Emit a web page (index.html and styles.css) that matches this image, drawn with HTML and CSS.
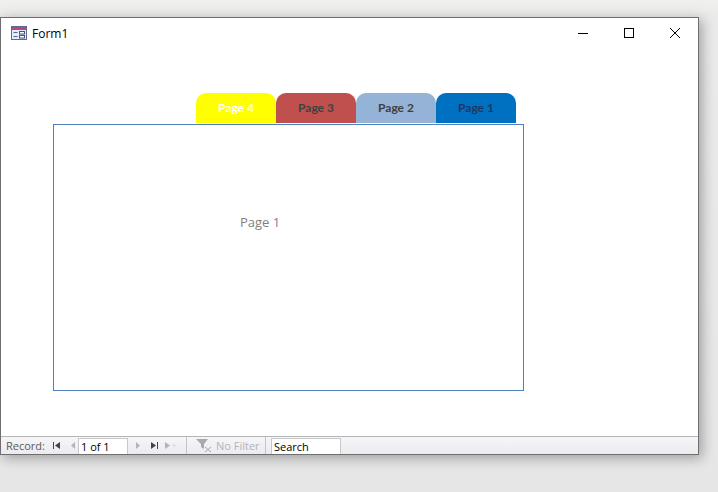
FILE: index.html
```html
<!DOCTYPE html>
<html lang="en">
<head>
<meta charset="utf-8">
<title>Form1</title>
<link rel="stylesheet" href="styles.css">
</head>
<body>
<div class="window">
  <header class="titlebar">
    <svg class="form-icon" width="16" height="15" viewBox="0 0 16 15">
      <rect x="0.5" y="0.5" width="15" height="13" fill="#eef1f8" stroke="#5a6a94"/>
      <rect x="1" y="1" width="14" height="3" fill="#b8487a"/>
      <rect x="1" y="4" width="14" height="9" fill="#e4eaf6"/>
      <path d="M2.5 6.5h4M2.5 10.5h4" stroke="#55688f" stroke-width="1"/>
      <rect x="8.5" y="5.5" width="5" height="2.5" fill="#fff" stroke="#3f5480"/>
      <rect x="8.5" y="9.5" width="5" height="2.5" fill="#fff" stroke="#3f5480"/>
    </svg>
    <span class="title">Form1</span>
    <div class="controls">
      <svg class="control" width="46" height="32" viewBox="0 0 46 32"><path d="M18 16.500h10" stroke="#000" fill="none"/></svg>
      <svg class="control" width="46" height="32" viewBox="0 0 46 32"><rect x="18.500" y="11.500" width="9" height="9" stroke="#000" fill="none"/></svg>
      <svg class="control" width="46" height="32" viewBox="0 0 46 32"><path d="M18 11l10 10M28 11l-10 10" stroke="#000" fill="none"/></svg>
    </div>
  </header>
  <main class="form-body">
    <div class="tabs">
      <div class="tab tab-yellow">Page 4</div>
      <div class="tab tab-red">Page 3</div>
      <div class="tab tab-blue">Page 2</div>
      <div class="tab tab-navy">Page 1</div>
    </div>
    <section class="page"><p class="page-label">Page 1</p></section>
  </main>
  <footer class="navbar">
    <span class="record-label">Record:</span>
    <svg class="nav-icon" width="10" height="9" viewBox="0 0 10 9"><path d="M1.500 1v7" stroke="#444" fill="none"/><path d="M8 1v7L3 4.500z" fill="#444"/></svg>
    <svg class="nav-icon nav-prev" width="8" height="9" viewBox="0 0 8 9"><path d="M6 1v7L2 4.500z" fill="#b4b4b8"/></svg>
    <div class="record-input">1 of 1</div>
    <svg class="nav-icon nav-next" width="8" height="9" viewBox="0 0 8 9"><path d="M2 1v7l4-3.500z" fill="#b4b4b8"/></svg>
    <svg class="nav-icon" width="10" height="9" viewBox="0 0 10 9"><path d="M2 1v7l5-3.500z" fill="#444"/><path d="M8.500 1v7" stroke="#444" fill="none"/></svg>
    <svg class="nav-icon" width="14" height="9" viewBox="0 0 14 9"><path d="M1 1v7l5-3.500z" fill="#b4b4b8"/><path d="M10 2.500v4M8 4.500h4" stroke="#dcdcdc" fill="none"/></svg>
    <div class="filter">
      <svg width="20" height="15" viewBox="0 0 20 15"><path d="M1 1h12L9 6v5L6 9V6z" fill="#a9a9ad"/><path d="M10 9l6 5M16 9l-6 5" stroke="#a9a9ad" fill="none"/></svg>
      <span class="filter-label">No Filter</span>
    </div>
    <div class="search">Search</div>
  </footer>
</div>
</body>
</html>
```

FILE: styles.css
```css
* { box-sizing: border-box; }

html, body {
  margin: 0;
  height: 100%;
}

body {
  padding-top: 17px;
  background: linear-gradient(#f0f0ef 0, #eaeaea 17px, #e6e6e6 100%);
  overflow: hidden;
}

.window {
  display: flex;
  flex-direction: column;
  width: 699px;
  height: 438px;
  background: #fff;
  border: 1px solid #6e6e6e;
  box-shadow: 3px 3px 12px rgba(0, 0, 0, 0.32);
}

.titlebar {
  display: flex;
  align-items: center;
  height: 30px;
  padding-left: 10px;
  flex: none;
}

.form-icon {
  display: block;
  margin-right: 5px;
}

.title {
  font: 12px "Open Sans", sans-serif;
  color: #000;
}

.controls {
  display: flex;
  margin-left: auto;
}

.control {
  display: block;
}

.form-body {
  flex: 1;
  padding-top: 45px;
  min-height: 0;
}

.tabs {
  display: flex;
  margin-left: 195px;
  height: 30px;
}

.tab {
  width: 80px;
  border-radius: 10px 10px 0 0;
  font: bold 12px/30px "Lato", sans-serif;
  text-align: center;
  color: #404040;
}

.tab-yellow { background: #ffff00; color: #fff; }
.tab-red { background: #c0504d; }
.tab-blue { background: #95b3d7; }
.tab-navy { background: #0070c0; color: #1f3864; }

.page {
  width: 471px;
  height: 267px;
  margin: 1px 0 0 52px;
  border: 1px solid #4f81bd;
  background: #fff;
}

.page-label {
  margin: 88px 0 0 186px;
  font: 13px/18px "Open Sans", sans-serif;
  color: #7f7f7f;
}

.navbar {
  display: flex;
  align-items: center;
  flex: none;
  height: 18px;
  padding-left: 5px;
  background: linear-gradient(#f6f6f9, #ebebf0);
  border-top: 1px solid #b5b5b5;
  font: 11px "Open Sans", sans-serif;
}

.record-label {
  color: #5a5a5a;
  width: 46px;
}

.nav-icon {
  display: block;
  margin-right: 5px;
}

.nav-prev {
  margin-left: 2px;
  margin-right: 1px;
}

.nav-next {
  margin-left: 6px;
  margin-right: 7px;
}

.record-input, .search {
  height: 16px;
  align-self: flex-end;
  background: #fff;
  border: 1px solid #c8c8c8;
  border-bottom: 0;
  padding-left: 2px;
  line-height: 15px;
  color: #000;
}

.record-input {
  width: 50px;
}

.filter {
  display: flex;
  align-items: center;
  gap: 1px;
  width: 80px;
  height: 100%;
  padding-left: 8px;
  margin-left: 3px;
  border-left: 1px solid #c4c4c4;
  border-right: 1px solid #c4c4c4;
}

.filter-label {
  color: #b4b4b8;
}

.search {
  width: 70px;
  margin-left: 5px;
}
```
